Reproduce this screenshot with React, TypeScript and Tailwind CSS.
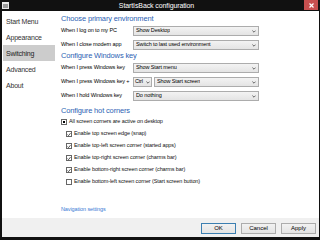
import { ReactNode } from 'react';

const font = { fontFamily: '"Liberation Sans", Arial, sans-serif' };

const navItems = ['Start Menu', 'Appearance', 'Switching', 'Advanced', 'About'];

function Chevron() {
    return (
        <svg width="4" height="3" viewBox="0 0 4 3" className="shrink-0">
            <path d="M0.4 0.6 L2 2.2 L3.6 0.6" fill="none" stroke="#444" strokeWidth="0.8" />
        </svg>
    );
}

function Select({ value, w, tight }: { value: string; w: string; tight?: boolean }) {
    return (
        <div className={`${w} h-[10px] flex items-center justify-between ${tight ? 'pl-[1px] pr-[1px] gap-[1px]' : 'pl-[2px] pr-[2px]'} border border-[#acacac] bg-gradient-to-b from-[#f3f3f3] to-[#e4e4e4] text-[5.5px] tracking-[-0.1px] text-black leading-none whitespace-nowrap`}>
            <span className={tight ? 'tracking-[-0.2px]' : 'overflow-hidden'}>{value}</span>
            <Chevron />
        </div>
    );
}

function Row({ label, children, mt }: { label: string; children: ReactNode; mt: string }) {
    return (
        <div className={`flex items-center h-[10px] ${mt}`}>
            <div className="w-[72px] shrink-0 text-[5.5px] tracking-[-0.1px] text-black leading-none whitespace-nowrap">{label}</div>
            {children}
        </div>
    );
}

function Heading({ children, mt }: { children: ReactNode; mt: string }) {
    return (
        <div className={`h-[10px] flex items-center text-[7.5px] tracking-[-0.15px] text-[#2d5fb4] leading-none ${mt}`}>
            {children}
        </div>
    );
}

function Check({ label, state, indent }: { label: string; state: 'on' | 'off' | 'mixed'; indent?: boolean }) {
    return (
        <div className={`flex items-center h-[12px] gap-[2px] ${indent ? 'pl-[5px]' : ''}`}>
            <div className="w-[6px] h-[6px] border border-[#666] bg-white flex items-center justify-center">
                {state === 'mixed' && <div className="w-[2px] h-[2px] bg-black" />}
                {state === 'on' && (
                    <svg width="5" height="5" viewBox="0 0 5 5">
                        <path d="M0.6 2.6 L1.9 3.9 L4.4 0.8" fill="none" stroke="#111" strokeWidth="0.9" />
                    </svg>
                )}
            </div>
            <span className="text-[5.5px] tracking-[-0.1px] text-[#111] leading-none whitespace-nowrap">{label}</span>
        </div>
    );
}

function DlgButton({ label, primary }: { label: string; primary?: boolean }) {
    return (
        <div className={`w-[35px] h-[11px] flex items-center justify-center border bg-gradient-to-b from-[#f2f2f2] to-[#e3e3e3] text-[6px] text-black leading-none ${primary ? 'border-[#3c7fb1]' : 'border-[#acacac]'}`}>
            {label}
        </div>
    );
}

export default function App() {
    return (
        <div className="w-[320px] h-[240px] bg-[#111] flex flex-col overflow-hidden" style={font}>
            {/* Title bar */}
            <div className="h-[11px] flex items-center relative shrink-0">
                <svg width="7" height="7" viewBox="0 0 7 7" className="ml-[2px]">
                    <rect x="0" y="0" width="7" height="7" fill="#e8e8e8" />
                    <rect x="1" y="2" width="5" height="4" fill="#9a9a9a" />
                </svg>
                <div className="flex-1 text-center text-white text-[7px] tracking-[-0.1px] leading-none">StartIsBack configuration</div>
                <div className="w-[14px] h-[10px] mr-[2px] self-start bg-[#c75050] flex items-center justify-center">
                    <svg width="5" height="5" viewBox="0 0 5 5">
                        <path d="M0.5 0.5 L4.5 4.5 M4.5 0.5 L0.5 4.5" stroke="#fff" strokeWidth="1.2" />
                    </svg>
                </div>
            </div>

            {/* Body */}
            <div className="flex-1 flex flex-col ml-[2px] mr-[1px] mb-[3px] bg-white">
                <div className="flex-1 flex">
                    {/* Sidebar */}
                    <div className="w-[59px] pt-[2px] flex flex-col shrink-0">
                        {navItems.map(item => (
                            <div
                                key={item}
                                className={`ml-[1px] w-[52px] h-[16px] flex items-center pl-[3px] text-[7px] tracking-[-0.2px] leading-none ${item === 'Switching' ? 'bg-[#cccccc] text-[#222]' : 'text-[#333]'}`}
                            >
                                {item}
                            </div>
                        ))}
                    </div>

                    {/* Main panel */}
                    <div className="flex-1 flex flex-col pt-[3px]">
                        <Heading mt="mt-0">Choose primary environment</Heading>
                        <Row label="When I log on to my PC" mt="mt-[2px]">
                            <Select value="Show Desktop" w="w-[126px]" />
                        </Row>
                        <Row label="When I close modern app" mt="mt-[4px]">
                            <Select value="Switch to last used environment" w="w-[126px]" />
                        </Row>

                        <Heading mt="mt-[1px]">Configure Windows key</Heading>
                        <Row label="When I press Windows key" mt="mt-[2px]">
                            <Select value="Show Start menu" w="w-[126px]" />
                        </Row>
                        <Row label="When I press Windows key +" mt="mt-[4px]">
                            <div className="flex gap-[2px]">
                                <Select value="Ctrl" w="w-[19px]" tight />
                                <Select value="Show Start screen" w="w-[105px]" />
                            </div>
                        </Row>
                        <Row label="When I hold Windows key" mt="mt-[4px]">
                            <Select value="Do nothing" w="w-[126px]" />
                        </Row>

                        <Heading mt="mt-[5px]">Configure hot corners</Heading>
                        <Check label="All screen corners are active on desktop" state="mixed" />
                        <Check label="Enable top screen edge (snap)" state="on" indent />
                        <Check label="Enable top-left screen corner (started apps)" state="on" indent />
                        <Check label="Enable top-right screen corner (charms bar)" state="on" indent />
                        <Check label="Enable bottom-right screen corner (charms bar)" state="on" indent />
                        <Check label="Enable bottom-left screen corner (Start screen button)" state="off" indent />

                        <div className="mt-[17px] h-[10px] flex items-center text-[5.5px] tracking-[-0.1px] text-[#3a7bd5] leading-none">
                            Navigation settings
                        </div>
                    </div>
                </div>

                {/* Footer */}
                <div className="h-[19px] shrink-0 bg-[#f0f0f0] flex items-center justify-end gap-[5px] pr-[3px] pt-[1px]">
                    <DlgButton label="OK" primary />
                    <DlgButton label="Cancel" />
                    <DlgButton label="Apply" />
                </div>
            </div>
        </div>
    );
}
